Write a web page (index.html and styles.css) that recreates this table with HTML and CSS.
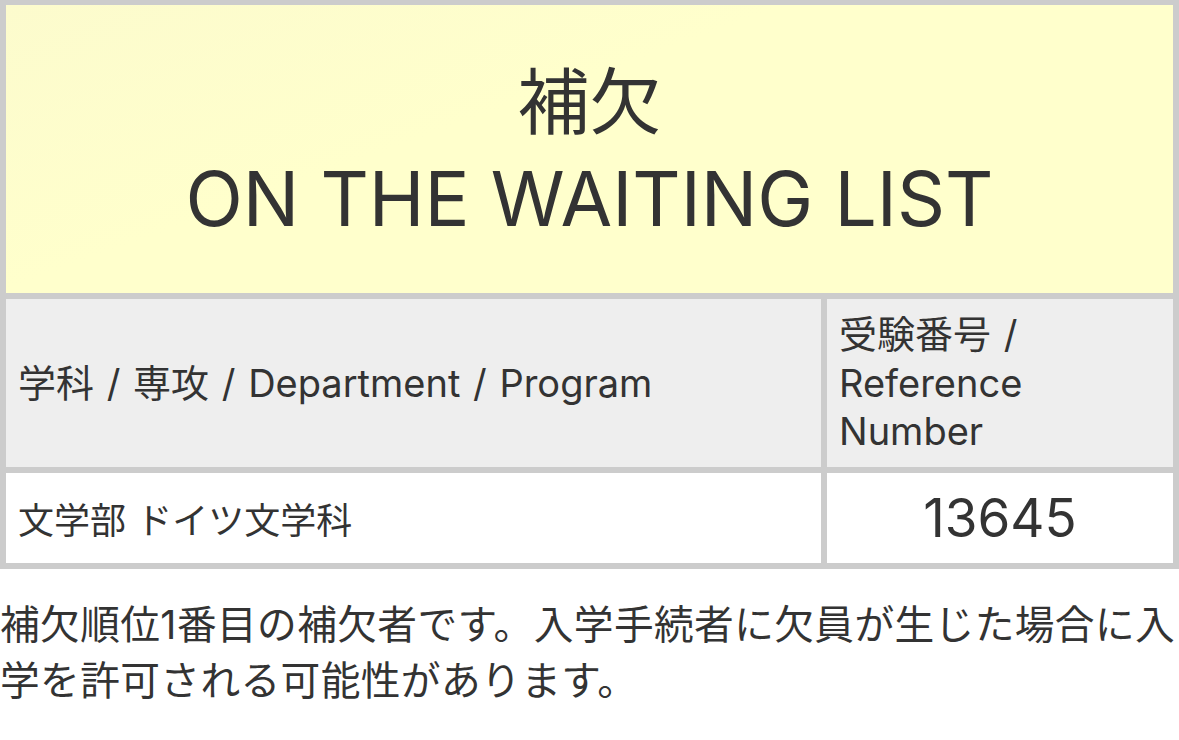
FILE: index.html
```html
<!DOCTYPE html>
<html lang="ja">
<head>
<meta charset="utf-8">
<title>補欠</title>
<link rel="stylesheet" href="styles.css">
</head>
<body>
<table class="result">
  <tr>
    <td class="status" colspan="2"><span class="status-ja">補欠</span><br>ON THE WAITING LIST</td>
  </tr>
  <tr>
    <th class="head head-dept">学科 / 専攻 / Department / Program</th>
    <th class="head head-ref">受験番号 /<br>Reference<br>Number</th>
  </tr>
  <tr>
    <td class="cell cell-dept">文学部 ドイツ文学科</td>
    <td class="cell cell-num">13645</td>
  </tr>
</table>
<p class="note">補欠順位1番目の補欠者です。入学手続者に欠員が生じた場合に入学を許可される可能性があります。</p>
</body>
</html>
```
FILE: styles.css
```css
html, body {
  margin: 0;
  padding: 0;
  background: #fff;
}
body {
  font-family: "Inter", "Noto Sans CJK JP", sans-serif;
  color: #333;
}
.result {
  width: 100%;
  border-collapse: separate;
  border-spacing: 6px;
  background: #ccc;
  margin-top: -1px;
}
.status {
  background: linear-gradient(160deg, #fcfbcd 0%, #ffffcc 40%);
  text-align: center;
  font-size: 75px;
  line-height: 97px;
  height: 288px;
  padding: 0;
  font-weight: 400;
}
.status-ja {
  font-size: 72px;
}
.head {
  background: #eee;
  font-weight: 400;
  text-align: left;
  font-size: 38px;
  line-height: 48.5px;
  word-spacing: 2px;
  padding: 0 12px;
  height: 168px;
  vertical-align: middle;
}
.head-ref {
  width: 322px;
}
.cell {
  background: #fff;
  font-size: 36px;
  height: 90px;
  padding: 0 12px;
}
.cell-num {
  text-align: center;
  font-size: 53px;
}
.note {
  margin: 28px 0 0;
  font-size: 39.7px;
  line-height: 56px;
  letter-spacing: 0.4px;
}
```
